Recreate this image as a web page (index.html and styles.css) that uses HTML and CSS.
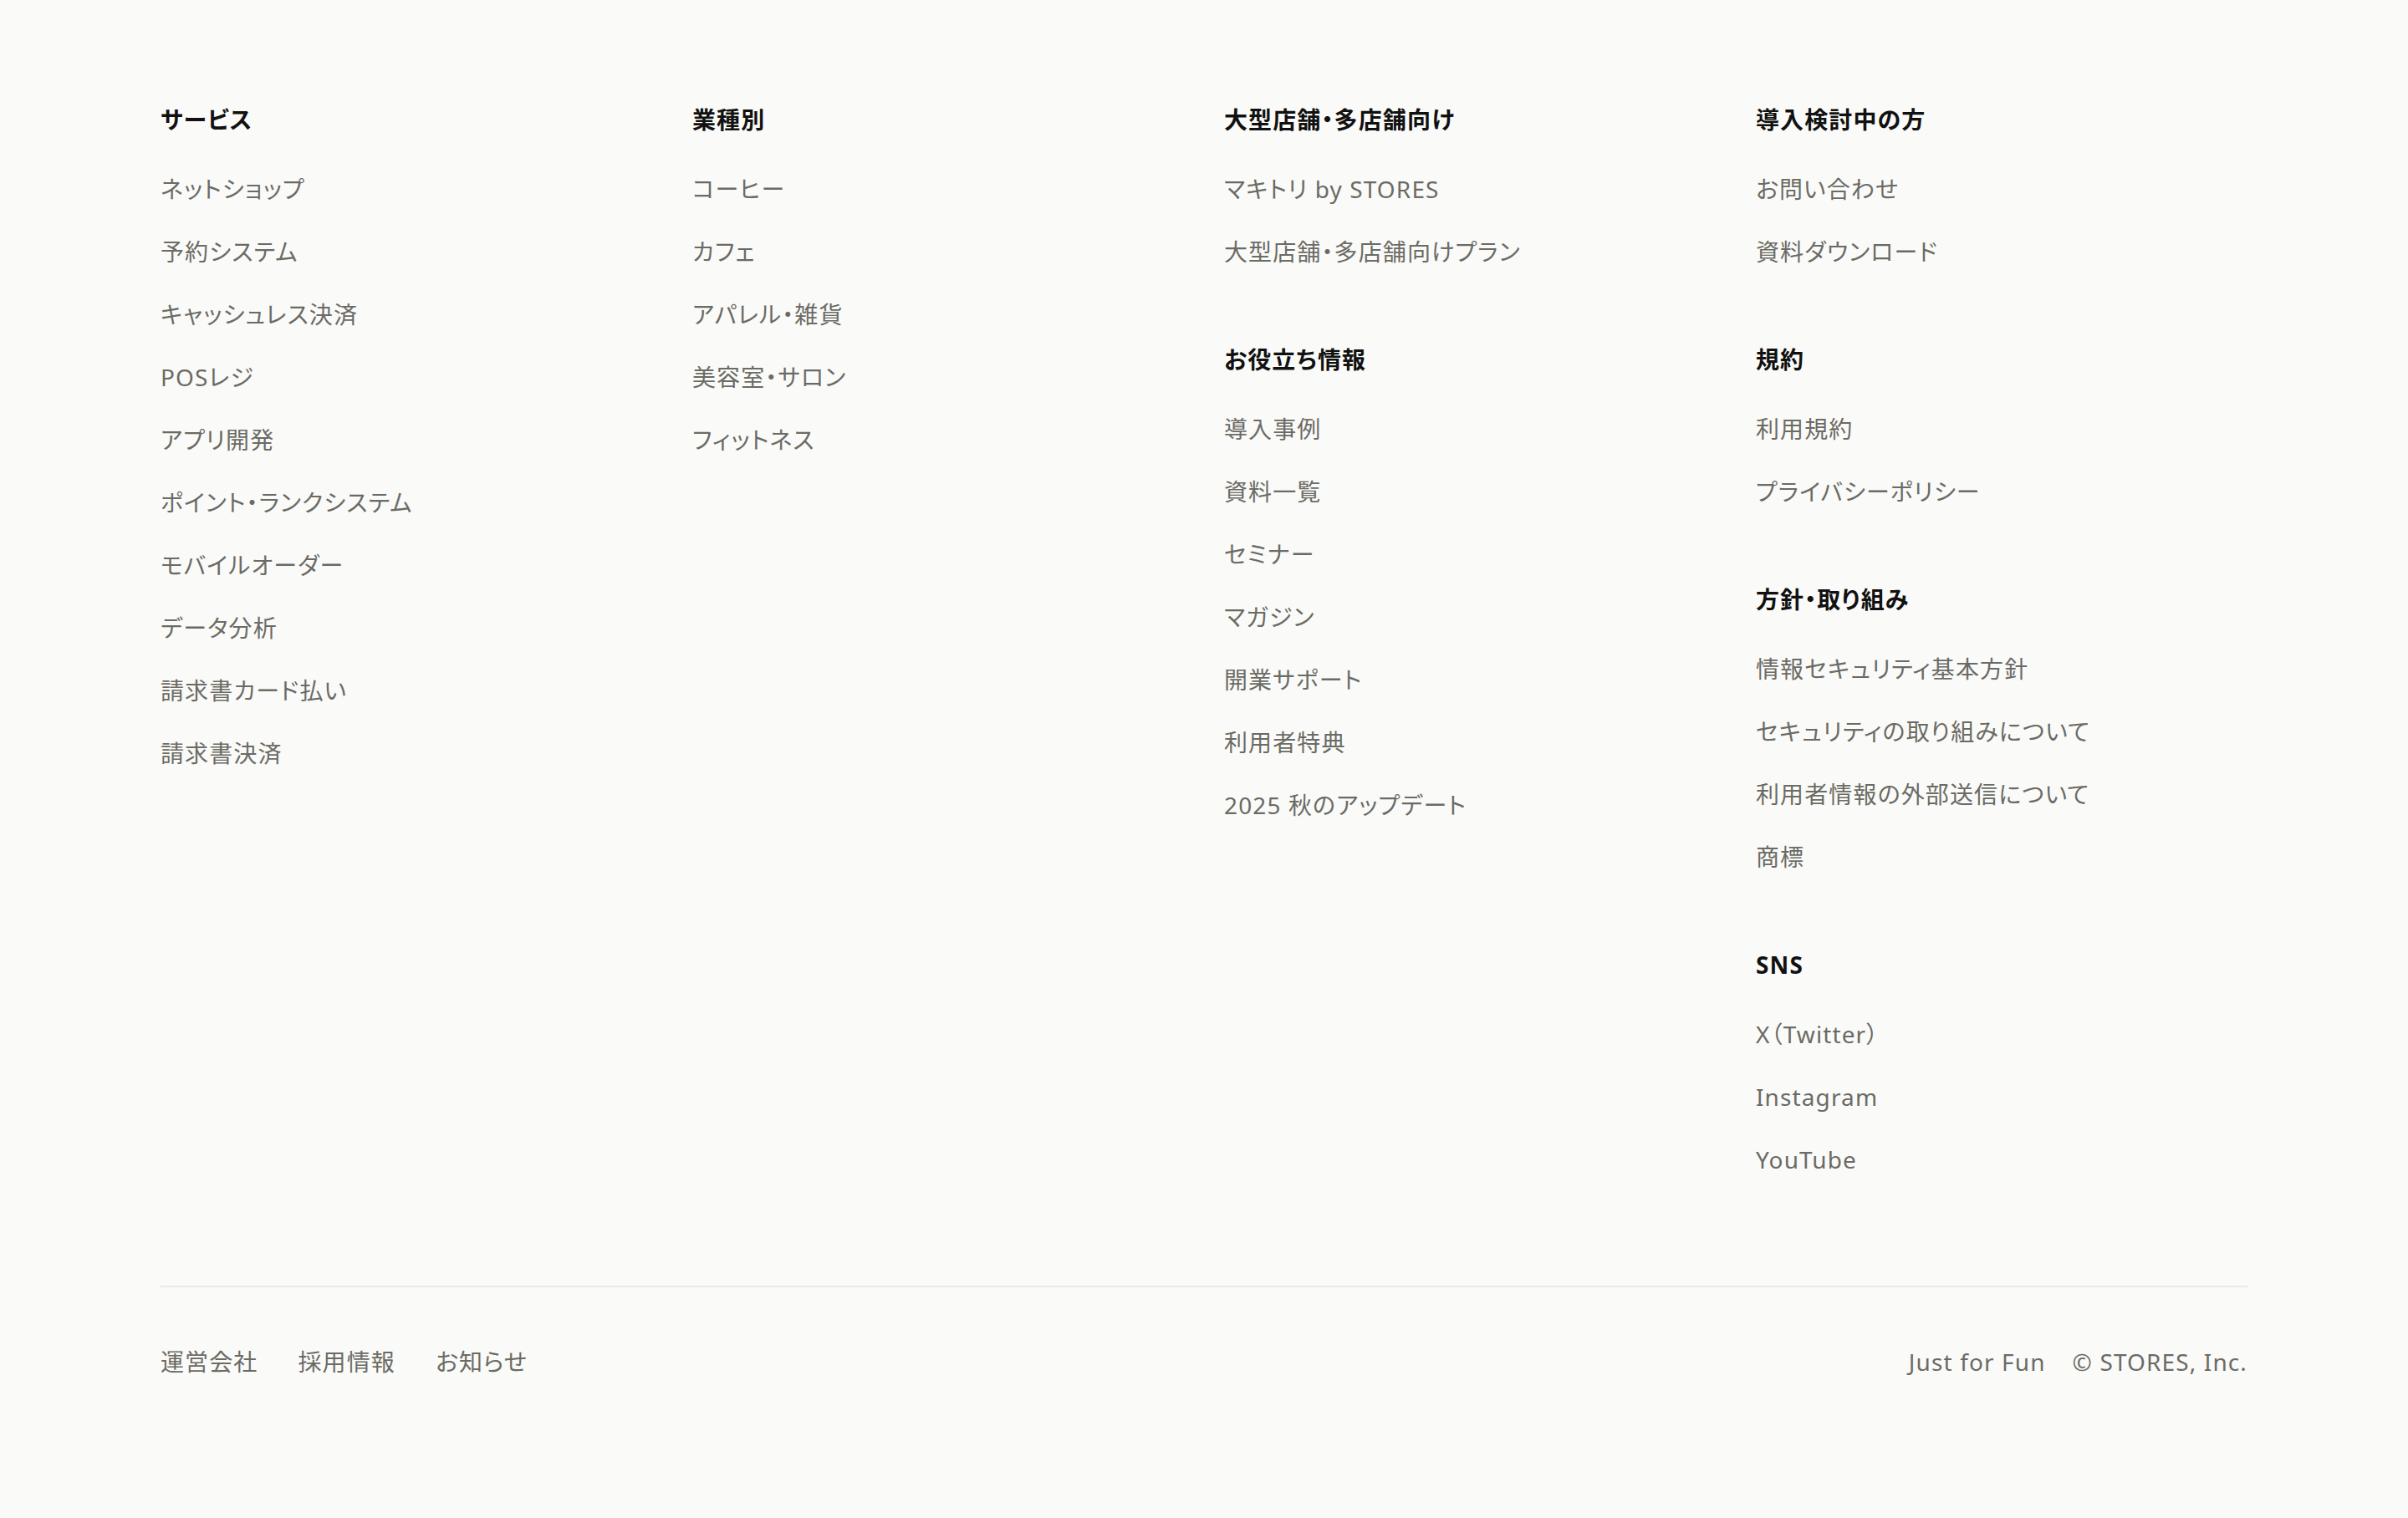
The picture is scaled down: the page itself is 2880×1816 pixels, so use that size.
FILE: index.html
```html
<!DOCTYPE html>
<html lang="ja">
<head>
  <meta charset="UTF-8" />
  <meta name="viewport" content="width=device-width, initial-scale=1.0"/>
  <title>STORES フッター</title>
  <link rel="stylesheet" href="styles.css">
</head>
<body>
  <footer class="footer">
    <div class="footer-nav">
      <div class="col">
        <div class="group">
          <h3>サービス</h3>
          <ul class="links">
            <li><a href="#">ネットショップ</a></li>
            <li><a href="#">予約システム</a></li>
            <li><a href="#">キャッシュレス決済</a></li>
            <li><a href="#">POSレジ</a></li>
            <li><a href="#">アプリ開発</a></li>
            <li><a href="#">ポイント・ランクシステム</a></li>
            <li><a href="#">モバイルオーダー</a></li>
            <li><a href="#">データ分析</a></li>
            <li><a href="#">請求書カード払い</a></li>
            <li><a href="#">請求書決済</a></li>
          </ul>
        </div>
      </div>

      <div class="col">
        <div class="group">
          <h3>業種別</h3>
          <ul class="links">
            <li><a href="#">コーヒー</a></li>
            <li><a href="#">カフェ</a></li>
            <li><a href="#">アパレル・雑貨</a></li>
            <li><a href="#">美容室・サロン</a></li>
            <li><a href="#">フィットネス</a></li>
          </ul>
        </div>
      </div>

      <div class="col">
        <div class="group">
          <h3>大型店舗・多店舗向け</h3>
          <ul class="links">
            <li><a href="#">マキトリ by STORES</a></li>
            <li><a href="#">大型店舗・多店舗向けプラン</a></li>
          </ul>
        </div>
        <div class="group">
          <h3>お役立ち情報</h3>
          <ul class="links">
            <li><a href="#">導入事例</a></li>
            <li><a href="#">資料一覧</a></li>
            <li><a href="#">セミナー</a></li>
            <li><a href="#">マガジン</a></li>
            <li><a href="#">開業サポート</a></li>
            <li><a href="#">利用者特典</a></li>
            <li><a href="#">2025 秋のアップデート</a></li>
          </ul>
        </div>
      </div>

      <div class="col">
        <div class="group">
          <h3>導入検討中の方</h3>
          <ul class="links">
            <li><a href="#">お問い合わせ</a></li>
            <li><a href="#">資料ダウンロード</a></li>
          </ul>
        </div>
        <div class="group">
          <h3>規約</h3>
          <ul class="links">
            <li><a href="#">利用規約</a></li>
            <li><a href="#">プライバシーポリシー</a></li>
          </ul>
        </div>
        <div class="group">
          <h3>方針・取り組み</h3>
          <ul class="links">
            <li><a href="#">情報セキュリティ基本方針</a></li>
            <li><a href="#">セキュリティの取り組みについて</a></li>
            <li><a href="#">利用者情報の外部送信について</a></li>
            <li><a href="#">商標</a></li>
          </ul>
        </div>
        <div class="group">
          <h3>SNS</h3>
          <ul class="links">
            <li><a href="#">X（Twitter）</a></li>
            <li><a href="#">Instagram</a></li>
            <li><a href="#">YouTube</a></li>
          </ul>
        </div>
      </div>
    </div>

    <div class="footer-bottom">
      <ul class="bottom-links">
        <li><a href="#">運営会社</a></li>
        <li><a href="#">採用情報</a></li>
        <li><a href="#">お知らせ</a></li>
      </ul>
      <div class="copy">
        <span>Just for Fun</span>
        <span>© STORES, Inc.</span>
      </div>
    </div>
  </footer>
</body>
</html>
```

FILE: styles.css
```css
body {
  margin: 0;
  background: #fafaf8;
  color: #6b6b65;
  font-family: 'Noto Sans', 'Noto Sans CJK JP', sans-serif;
  font-size: 28px;
  line-height: 39px;
  letter-spacing: 0.04em;
  font-feature-settings: "palt";
}
a {
  color: inherit;
  text-decoration: none;
}
a:hover {
  color: #111;
}
ul {
  list-style: none;
  margin: 0;
  padding: 0;
}
.footer {
  max-width: 2496px;
  margin: 0 auto;
  padding-top: 124px;
}
.footer-nav {
  display: grid;
  grid-template-columns: repeat(4, 1fr);
  column-gap: 48px;
  padding-bottom: 131px;
  border-bottom: 2px solid #e9e9e6;
}
.group + .group {
  margin-top: 90px;
}
h3 {
  margin: 0 0 44px;
  color: #111;
  font-size: 28px;
  font-weight: 700;
  line-height: 39px;
}
.links {
  display: flex;
  flex-direction: column;
  gap: 36px;
}
.footer-bottom {
  display: flex;
  justify-content: space-between;
  align-items: center;
  padding-top: 70px;
  padding-bottom: 165px;
}
.bottom-links {
  display: flex;
  gap: 48px;
}
.copy {
  display: flex;
  gap: 32px;
}
```
